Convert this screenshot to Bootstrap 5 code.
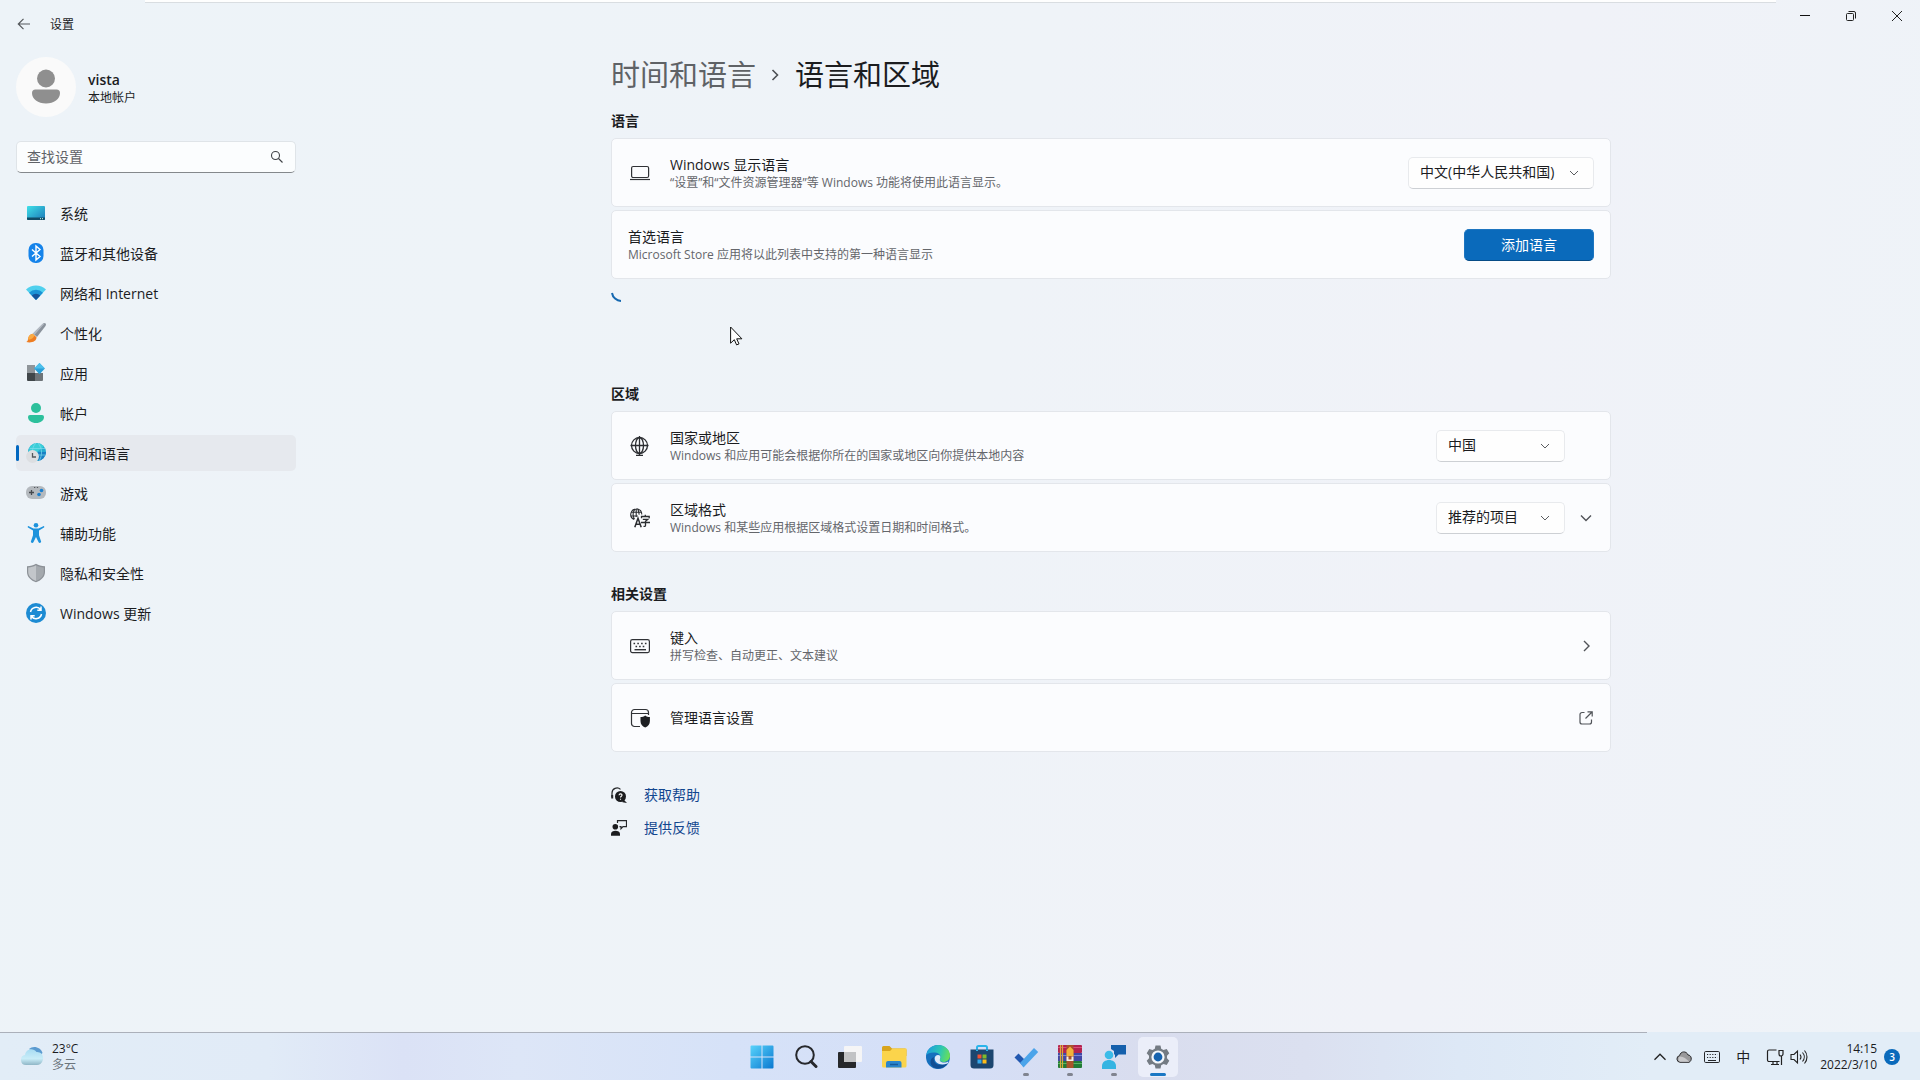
<!DOCTYPE html>
<html lang="zh-CN">
<head>
<meta charset="utf-8">
<meta name="viewport" content="width=device-width, initial-scale=1">
<title>设置</title>
<link href="https://cdn.jsdelivr.net/npm/bootstrap@5.3.0/dist/css/bootstrap.min.css" rel="stylesheet">
<style>
  :root { --ink: #1b1c1f; --dim: #64666b; --accent: #0a6abb; }
  body {
    font-family: "Open Sans", "Noto Sans CJK SC", sans-serif;
    font-size: 14px; line-height: 20px; color: var(--ink);
    background: linear-gradient(100deg, #edf3f8 0%, #eff3f8 50%, #f0f2f8 75%, #eef3f8 100%);
  }
  svg { display: block; flex: none; }
  .plain-btn { background: none; border: 0; padding: 0; color: inherit; }
  .small-text { font-size: 12px; line-height: 16px; }
  .text-drop { padding-top: 2px; }

  .title-bar {
    height: 48px; gap: 18px; padding-left: 16px;
    background:
      linear-gradient(#fefefe 2px, #d9dde1 2px) 145px 0 / calc(100% - 289px) 3px no-repeat;
  }
  .win-btn { width: 46px; height: 32px; }

  .side { width: 302px; padding: 9px 6px 0 16px; flex: none; }
  .avatar { width: 60px; height: 60px; background: #fafafa; }
  .search-box { margin-top: 24px; width: 280px; }
  .search-box input {
    height: 32px; font-size: 14px; padding: 3px 36px 5px 10px; color: var(--ink);
    background: #fbfdfe; border: 1px solid #dfe4e8; border-bottom-color: #84888c; border-radius: 5px;
  }
  .search-box input::placeholder { color: #5f6267; }
  .search-box button { top: 8px; right: 11px; }
  .side-nav { margin-top: 22px; gap: 4px; width: 280px; }
  .side-nav .nav-link {
    display: flex; align-items: center; gap: 14px; height: 36px; padding: 0 10px;
    color: var(--ink); border-radius: 5px; position: relative;
  }
  .side-nav .nav-link.active { background: #e6e9ee; color: var(--ink); }
  .side-nav .nav-link.active::before {
    content: ""; position: absolute; left: 0; top: 10px; width: 3px; height: 16px;
    border-radius: 2px; background: #0067c0;
  }

  .page { max-width: 1000px; padding-top: 7px; }
  .crumbs { font-size: 29px; line-height: 40px; gap: 15px; margin-bottom: 16px; }
  .crumbs a { color: #5f6266; text-decoration: none; }
  .crumbs h1 { font-size: 29px; line-height: 40px; font-weight: 400; margin: 0; }
  .group-title { font-size: 14px; line-height: 20px; font-weight: 600; margin: 0 0 7px; }
  .group { display: flex; flex-direction: column; gap: 3px; margin-bottom: 32px; }
  .setting {
    display: flex; align-items: center; min-height: 69px; padding: 1px 16px 0;
    background: #fbfcfe; border: 1px solid #e3e6eb; border-radius: 5px; color: var(--ink);
    text-decoration: none;
  }
  .setting .lead-icon { width: 24px; margin-right: 18px; display: flex; justify-content: center; flex: none; }
  .setting .hint { font-size: 12px; line-height: 16px; color: var(--dim); }
  .pick {
    width: 129px; height: 32px; font-size: 14px; line-height: 20px; padding: 4px 30px 6px 11px;
    color: var(--ink); border: 1px solid #e8eaed; border-bottom-color: #cdd0d4; border-radius: 5px;
    background: #fefefe url("data:image/svg+xml,%3Csvg xmlns='http://www.w3.org/2000/svg' viewBox='0 0 10 10'%3E%3Cpath d='M1 3l4 4 4-4' fill='none' stroke='%235a5c60'/%3E%3C/svg%3E") no-repeat right 14px center / 10px 10px;
  }
  .pick-wide { width: 186px; }
  .pick-indent { margin-right: 29px; }
  .add-btn {
    width: 130px; height: 32px; padding: 0; font-size: 14px; line-height: 20px; color: #fff;
    background: var(--accent); border: 1px solid #1d75c0; border-bottom-color: #064b86; border-radius: 5px;
  }
  .loading { height: 70px; }
  .pointer { position: absolute; left: 119px; top: 278px; }
  .help-list { display: flex; flex-direction: column; gap: 13px; padding-top: 1px; }
  .help-list a { display: flex; align-items: center; gap: 17px; color: #12468f; text-decoration: none; }

  .task-bar {
    height: 48px; padding-top: 2px;
    background:
      linear-gradient(#abb0ba, #abb0ba) 0 0 / calc(100% - 273px) 1px no-repeat,
      linear-gradient(90deg, #e2edf7 0%, #e1ebf7 14%, #dbe2f6 21%, #dde6f7 27%, #d6e2f8 38%, #d5dff7 50%, #d9ddee 60%, #dbe0f0 68%, #dde8f6 76%, #e2edf7 86%, #e2edf7 100%);
  }
  .side-slot { flex: 1 1 0; }
  .weather { gap: 8px; padding-left: 20px; }
  .apps { gap: 4px; }
  .app-btn {
    width: 40px; height: 40px; border-radius: 5px; position: relative;
    display: flex; align-items: center; justify-content: center;
  }
  .app-btn.current { background: #ebeef9; }
  .app-btn.running::after, .app-btn.current::after {
    content: ""; position: absolute; bottom: 1px; left: 17px; width: 6px; height: 3px;
    border-radius: 2px; background: #80848f;
  }
  .app-btn.current::after { left: 12px; width: 16px; background: #1a77c4; }
  .tray { padding-right: 20px; }
  .tray-more { margin-right: 9px; }
  .tray-set { gap: 12px; margin-right: 12px; }
  .tray-net { gap: 6px; }
  .count { width: 16px; height: 16px; font-size: 10px; line-height: 16px; background: var(--accent); color: #fff; margin-left: 7px; }
</style>
</head>
<body class="d-flex flex-column min-vh-100">

<header class="title-bar d-flex align-items-center">
  <button class="plain-btn" aria-label="返回">
    <svg width="16" height="16" viewBox="0 0 16 16" fill="none" stroke="#55585c" stroke-width="1.2"><path d="M14 8H2.5M7.500 2.800L2.300 8l5.200 5.200"/></svg>
  </button>
  <span class="small-text text-drop">设置</span>
  <div class="d-flex ms-auto align-self-start">
    <button class="plain-btn win-btn d-flex align-items-center justify-content-center" aria-label="最小化">
      <svg width="12" height="12" viewBox="0 0 12 12" stroke="#111"><path d="M1 5.500h10"/></svg>
    </button>
    <button class="plain-btn win-btn d-flex align-items-center justify-content-center" aria-label="还原">
      <svg width="12" height="12" viewBox="0 0 12 12" fill="none" stroke="#222"><rect x="1.500" y="3.500" width="7" height="7" rx="1"/><path d="M3.500 1.500H9a1.500 1.500 0 0 1 1.500 1.500v5.500"/></svg>
    </button>
    <button class="plain-btn win-btn d-flex align-items-center justify-content-center" aria-label="关闭">
      <svg width="12" height="12" viewBox="0 0 12 12" stroke="#222"><path d="M1 1l10 10M11 1L1 11"/></svg>
    </button>
  </div>
</header>

<div class="d-flex flex-grow-1">
  <aside class="side">
    <div class="d-flex align-items-center gap-2">
      <div class="avatar rounded-circle d-flex align-items-center justify-content-center me-1">
        <svg width="30" height="36" viewBox="0 0 30 36" fill="#8f8f8f"><circle cx="15" cy="9.500" r="9"/><path d="M4.500 20.500h21a3.500 3.500 0 0 1 3.500 3.500c0 6-6 10.500-14 10.500S1 30 1 24a3.500 3.500 0 0 1 3.500-3.500z"/></svg>
      </div>
      <div class="text-drop">
        <div class="fw-semibold">vista</div>
        <div class="small-text">本地帐户</div>
      </div>
    </div>

    <form class="search-box position-relative">
      <input class="form-control" type="text" aria-label="查找设置" placeholder="查找设置">
      <button type="button" class="plain-btn position-absolute" aria-label="搜索">
        <svg width="16" height="16" viewBox="0 0 16 16" fill="none" stroke="#3f4246" stroke-width="1.100"><circle cx="6.500" cy="6.500" r="4"/><path d="M9.500 9.500l4 4"/></svg>
      </button>
    </form>

    <nav class="side-nav nav nav-pills flex-column">
      <a class="nav-link" href="#">
        <svg width="20" height="20" viewBox="0 0 20 20"><defs><linearGradient id="gs" x1="0" y1="0" x2="1" y2="1"><stop stop-color="#3fe0e8"/><stop offset="1" stop-color="#1b78b8"/></linearGradient></defs><rect x="1" y="3" width="18" height="14" rx="1" fill="url(#gs)"/><path d="M1 14.500h18V16a1 1 0 0 1-1 1H2a1 1 0 0 1-1-1z" fill="#114c66"/><path d="M14 15.700h1M16 15.700h1" stroke="#cfe"/></svg>
        <span class="text-drop">系统</span></a>
      <a class="nav-link" href="#">
        <svg width="20" height="20" viewBox="0 0 20 20"><rect x="2.500" y="0" width="15" height="20" rx="7" fill="#1583ea"/><path d="M6 6.500l8 7-4 3.500V3l4 3.500-8 7" fill="none" stroke="#fff" stroke-width="1.400"/></svg>
        <span class="text-drop">蓝牙和其他设备</span></a>
      <a class="nav-link" href="#">
        <svg width="20" height="20" viewBox="0 0 20 20"><path d="M10 17L0 6.600a14.300 14.300 0 0 1 20 0z" fill="#4fd0ee"/><path d="M10 17L3 9.700a10 10 0 0 1 14 0z" fill="#1b93d6"/><path d="M10 17l-4.300-4.500a6.200 6.200 0 0 1 8.600 0z" fill="#15549b"/></svg>
        <span class="text-drop">网络和 Internet</span></a>
      <a class="nav-link" href="#">
        <svg width="20" height="20" viewBox="0 0 20 20"><path d="M19.500.500c.7.700.5 1.700 0 2.500l-8.500 11-4-3.500L16.500 1c1-1 2.300-1.200 3-.5z" fill="#8a929c"/><path d="M18.800.3L8.500 11.800 7 10.500 16.500 1c.8-.7 1.700-1 2.300-.7z" fill="#b5bbc4"/><path d="M6.700 10.700l3.800 3.600c.2 4-5 6-10.200 4.700 1.800-.8 1.400-2 2-4.200.6-2.400 2.400-3.900 4.400-4.100z" fill="#ee7d22"/><path d="M6.700 10.700l1.900 1.800c-1.500 2.500-3.200 4-5.900 4.300-.4 0-.5-.8-.4-1.900.4-2.500 2.400-4 4.400-4.200z" fill="#f9ab45"/></svg>
        <span class="text-drop">个性化</span></a>
      <a class="nav-link" href="#">
        <svg width="20" height="20" viewBox="0 0 20 20"><path d="M1 2h8v8.500H1z" fill="#8f959a"/><path d="M1 10h8v8H2a1 1 0 0 1-1-1z" fill="#40464a"/><path d="M9 10h8v7a1 1 0 0 1-1 1H9z" fill="#6e7479"/><path d="M13.500 0l5.400 5.600-5.400 5.600-5.400-5.600z" fill="#2a9fd8"/><path d="M13.500 0l5.400 5.600H8.100z" fill="#4cc0ec"/></svg>
        <span class="text-drop">应用</span></a>
      <a class="nav-link" href="#">
        <svg width="20" height="20" viewBox="0 0 20 20" fill="#2cc09c"><circle cx="10" cy="5" r="5"/><path d="M4 12h12a2 2 0 0 1 2 2c0 3.500-3.500 6-8 6s-8-2.500-8-6a2 2 0 0 1 2-2z"/></svg>
        <span class="text-drop">帐户</span></a>
      <a class="nav-link active" aria-current="page" href="#">
        <svg width="20" height="20" viewBox="0 0 20 20"><circle cx="11" cy="9" r="9" fill="#25abd0"/><path d="M4 3.500a9 9 0 0 1 14 0L11 9H2.500z" fill="#3ccfd8"/><path d="M20 9a9 9 0 0 1-8 9V9z" fill="#1b80c4"/><path d="M3.500 5.500h15.500M8 12h11.500M12 0c4.500 5 4.500 13 1 18M10 0C7 3 6.500 6 6.500 9" fill="none" stroke="#7fdcec" stroke-width=".7"/><circle cx="6.500" cy="13.500" r="6.400" fill="#dcdee1"/><path d="M6.500 10v4h3.500" fill="none" stroke="#54575b" stroke-width="1.300"/></svg>
        <span class="text-drop">时间和语言</span></a>
      <a class="nav-link" href="#">
        <svg width="20" height="20" viewBox="0 0 20 20"><rect y="3" width="20" height="13" rx="6" fill="#b4b9be"/><path d="M3 9.500h5M5.500 7v5" stroke="#45494e" stroke-width="1.300"/><circle cx="15.500" cy="7.500" r="1.800" fill="#1c80cf"/><circle cx="13" cy="11.500" r="1.800" fill="#1c80cf"/><path d="M8 4.500h1.300M10.800 4.500h1.300" stroke="#55595e"/></svg>
        <span class="text-drop">游戏</span></a>
      <a class="nav-link" href="#">
        <svg width="20" height="20" viewBox="0 0 20 20" fill="#1c92dc"><circle cx="10" cy="2.300" r="2.300"/><path d="M2.700 3.200c-.8-.4-1.400.9-.7 1.400L7 7.500v4.700L4.900 18.500c-.3 1.400 1.900 2 2.500.8L10 14l2.600 5.300c.6 1.200 2.800.6 2.500-.8L13 12.200V7.500l5-2.900c.7-.5.100-1.800-.7-1.400L12.500 5.500h-5z"/></svg>
        <span class="text-drop">辅助功能</span></a>
      <a class="nav-link" href="#">
        <svg width="20" height="20" viewBox="0 0 20 20"><path d="M10 .8C7.500 2.500 4.500 3.200 1 3.300V9c0 5 4 8.500 9 10.300 5-1.800 9-5.300 9-10.300V3.300C15.500 3.200 12.500 2.500 10 .8z" fill="#8c9197"/><path d="M10 2.200C7.700 3.600 5 4.300 2.200 4.500V9c0 4.300 3.500 7.300 7.800 9z" fill="#c2c6ca"/><path d="M10 2.200c2.300 1.400 5 2.100 7.800 2.300V9c0 4.300-3.500 7.300-7.800 9z" fill="#a4a9ae"/></svg>
        <span class="text-drop">隐私和安全性</span></a>
      <a class="nav-link" href="#">
        <svg width="20" height="20" viewBox="0 0 20 20"><circle cx="10" cy="10" r="10" fill="#1d8bd3"/><path d="M4.500 9a5.700 5.700 0 0 1 10.200-2.300M15.500 11a5.700 5.700 0 0 1-10.200 2.300M15 3.500v3.700h-3.700M5 16.500v-3.700h3.700" fill="none" stroke="#fff" stroke-width="1.500"/></svg>
        <span class="text-drop">Windows 更新</span></a>
    </nav>
  </aside>

  <main class="flex-grow-1 px-3">
    <div class="page mx-auto position-relative">
      <div class="crumbs d-flex align-items-center">
        <a href="#">时间和语言</a>
        <svg width="9" height="12" viewBox="0 0 9 12" fill="none" stroke="#4d5054" stroke-width="1.600"><path d="M1.500 1l5 5-5 5"/></svg>
        <h1>语言和区域</h1>
      </div>

      <h2 class="group-title">语言</h2>
      <section class="group">
        <div class="setting">
          <span class="lead-icon"><svg width="20" height="20" viewBox="0 0 20 20" fill="none" stroke="#303236" stroke-width="1.200"><rect x="1.600" y="3.500" width="17" height="11" rx="1.500"/><path d="M0 16.500h20"/></svg></span>
          <div class="flex-grow-1">
            <label class="d-block" for="display-lang">Windows 显示语言</label>
            <div class="hint">“设置”和“文件资源管理器”等 Windows 功能将使用此语言显示。</div>
          </div>
          <select id="display-lang" class="form-select pick pick-wide"><option>中文(中华人民共和国)</option></select>
        </div>
        <div class="setting">
          <div class="flex-grow-1">
            <div>首选语言</div>
            <div class="hint">Microsoft Store 应用将以此列表中支持的第一种语言显示</div>
          </div>
          <button class="btn add-btn">添加语言</button>
        </div>
        <div class="loading" role="status" aria-label="正在加载">
          <svg width="20" height="20" viewBox="0 0 20 20" fill="none" stroke="#1668b0" stroke-width="2"><path d="M1 11a9.500 9.500 0 0 0 9 8"/></svg>
        </div>
      </section>

      <h2 class="group-title">区域</h2>
      <section class="group">
        <div class="setting">
          <span class="lead-icon"><svg width="20" height="20" viewBox="0 0 20 20" fill="none" stroke="#2b2d31" stroke-width="1.300"><circle cx="9.500" cy="9.500" r="8"/><ellipse cx="9.500" cy="9.500" rx="4" ry="8"/><path d="M.5 9.500h18M9.500 0v19M6 19.300h7"/></svg></span>
          <div class="flex-grow-1">
            <label class="d-block" for="country">国家或地区</label>
            <div class="hint">Windows 和应用可能会根据你所在的国家或地区向你提供本地内容</div>
          </div>
          <select id="country" class="form-select pick pick-indent"><option>中国</option></select>
        </div>
        <div class="setting">
          <span class="lead-icon"><svg width="20" height="20" viewBox="0 0 20 20" fill="none" stroke="#2b2d31" stroke-width="1.100"><path d="M4 11.500A5.500 5.500 0 1 1 11.800 6.500M1 4.300h10.500M.8 8h7M5 .9c-2.200 3-2.200 7.300-.5 10.300M7.500.9c1.200 1.700 1.700 3.700 1.500 5.700M6.200.6v8.500"/><path d="M4.800 19.300l3.200-9 3.200 9M6 16.300h4" stroke-width="1.500"/><path d="M11.500 10.300V8.500h7.700v1.800M15.300 6.800v1.700M12.800 11.300h5l-2.300 2v4.200c0 .8-.7 1-2 .8M11 14.500h9" stroke-width="1.300"/></svg></span>
          <div class="flex-grow-1">
            <label class="d-block" for="format">区域格式</label>
            <div class="hint">Windows 和某些应用根据区域格式设置日期和时间格式。</div>
          </div>
          <select id="format" class="form-select pick"><option>推荐的项目</option></select>
          <button class="plain-btn ps-1 ms-2" aria-label="展开"><svg width="17" height="16" viewBox="0 0 17 16" fill="none" stroke="#505358" stroke-width="1.400"><path d="M4 5.500l5 5 5-5"/></svg></button>
        </div>
      </section>

      <h2 class="group-title">相关设置</h2>
      <section class="group">
        <a class="setting" href="#">
          <span class="lead-icon"><svg width="20" height="20" viewBox="0 0 20 20" fill="none" stroke="#303236" stroke-width="1.200"><rect x=".600" y="3.600" width="18.800" height="13" rx="1.800"/><path d="M3.500 7.500h13" stroke-width="1.600" stroke-dasharray="1.600 2.200"/><path d="M5.500 10.500h10" stroke-width="1.600" stroke-dasharray="1.600 2"/><path d="M4.500 13.700h11.500" stroke-width="1.400"/></svg></span>
          <div class="flex-grow-1">
            <div>键入</div>
            <div class="hint">拼写检查、自动更正、文本建议</div>
          </div>
          <svg width="16" height="16" viewBox="0 0 16 16" fill="none" stroke="#505358" stroke-width="1.400"><path d="M6 3l5 5-5 5"/></svg>
        </a>
        <a class="setting" href="#">
          <span class="lead-icon"><svg width="20" height="20" viewBox="0 0 20 20" fill="none" stroke="#303236" stroke-width="1.200"><path d="M10 18.500H4.500a3 3 0 0 1-3-3v-11a3 3 0 0 1 3-3h11a3 3 0 0 1 3 3V7M1.500 5.500h17"/><path d="M15.200 7.500c-1.300 1-2.800 1.500-4.700 1.600V13c0 3.300 1.800 5.300 4.700 6.500 2.900-1.200 4.700-3.200 4.700-6.500V9.100c-1.900-.1-3.400-.6-4.700-1.600z" fill="#1d1f22" stroke="none"/></svg></span>
          <div class="flex-grow-1">管理语言设置</div>
          <svg width="16" height="16" viewBox="0 0 16 16" fill="none" stroke="#505358" stroke-width="1.200"><path d="M6.500 2.500H4A2 2 0 0 0 2 4.500V12a2 2 0 0 0 2 2h7.500a2 2 0 0 0 2-2V9.500M9.500 1.800h4.700v4.700M14 2L7.500 8.500"/></svg>
        </a>
      </section>

      <div class="help-list">
        <a href="#"><svg width="16" height="16" viewBox="0 0 16 16"><path d="M1 10V6a5 5 0 0 1 8.500-3.600" fill="none" stroke="#26282b" stroke-width="1.200"/><path d="M.2 8h2v3.500h-2z" fill="#26282b"/><circle cx="9.500" cy="9.500" r="5.500" fill="#1b1c1f"/><path d="M12 12l4 4-4.500-.8z" fill="#1b1c1f"/><path d="M8 8.300c.2-2 3.200-1.800 3 0-.1 1-1.500 1-1.500 2.300M9.500 11.800v1" fill="none" stroke="#fff" stroke-width="1.100"/></svg>获取帮助</a>
        <a href="#"><svg width="16" height="16" viewBox="0 0 16 16"><circle cx="4.300" cy="6.800" r="2.800" fill="#1b1c1f"/><path d="M0 15.800V14c0-4.400 9-4.400 9 0v1.800z" fill="#1b1c1f"/><path d="M6.500 3V.7h9v6H12l-2 2v-2H8.500" fill="none" stroke="#26282b" stroke-width="1.200"/></svg>提供反馈</a>
      </div>

      <svg class="pointer" width="13" height="20" viewBox="0 0 13 20"><path d="M.6 1v16.200l3.700-3.500 2.300 5.200 2.400-1-2.300-5.100h5.200z" fill="#fff" stroke="#111"/></svg>
    </div>
  </main>
</div>

<footer class="task-bar d-flex align-items-center">
  <div class="side-slot weather d-flex align-items-center">
    <svg width="24" height="24" viewBox="0 0 24 24"><defs><linearGradient id="gw" x1="0" y1="0" x2="0" y2="1"><stop stop-color="#a8dcf2"/><stop offset=".6" stop-color="#c9edf8"/><stop offset="1" stop-color="#8fb6c6"/></linearGradient></defs><path d="M9 4c4-4 12-2 13.500 4l-3 3z" fill="#5b9bd0"/><path d="M6 20a5 5 0 0 1-1-9.900C5.500 4 13 2 16.500 7c5-.5 8 4.500 6 9-1 2.600-3 4-5.500 4z" fill="url(#gw)"/></svg>
    <div class="small-text"><div>23°C</div><div class="text-secondary">多云</div></div>
  </div>

  <nav class="apps d-flex">
    <button class="plain-btn app-btn" aria-label="开始"><svg width="24" height="24" viewBox="0 0 24 24"><defs><linearGradient id="g0" x1="0" y1="0" x2="1" y2="1"><stop stop-color="#58d3fb"/><stop offset="1" stop-color="#0a78d0"/></linearGradient></defs><path d="M.5 1.500a1 1 0 0 1 1-1h10v11H.5zM12.500.500h10a1 1 0 0 1 1 1v10h-11zM.5 12.500h11v11h-10a1 1 0 0 1-1-1zM12.500 12.500h11v10a1 1 0 0 1-1 1h-10z" fill="url(#g0)"/></svg></button>
    <button class="plain-btn app-btn" aria-label="搜索"><svg width="24" height="24" viewBox="0 0 24 24" fill="none" stroke="#26282c"><circle cx="11" cy="10" r="8.800" stroke-width="2"/><path d="M17 16.500l5 5" stroke-width="3" stroke-linecap="round"/></svg></button>
    <button class="plain-btn app-btn" aria-label="任务视图"><svg width="26" height="24" viewBox="0 0 26 24"><rect x="1" y="7" width="18" height="16" rx="1" fill="#26282b"/><rect x="7" y="1" width="18" height="16" rx="1" fill="#f5f5f6"/><path d="M7 7h12v10H7z" fill="#c2c3c5"/></svg></button>
    <button class="plain-btn app-btn" aria-label="文件资源管理器"><svg width="26" height="24" viewBox="0 0 26 24"><path d="M1 2.500A1.500 1.500 0 0 1 2.500 1h6l2.500 2.500H24A1.500 1.500 0 0 1 25.500 5v6H1z" fill="#d9a51d"/><path d="M1 6h8l2.500-2.500h14V21a1.500 1.500 0 0 1-1.500 1.500H2.500A1.500 1.500 0 0 1 1 21z" fill="#fbd44b"/><path d="M5 22.500V18a2 2 0 0 1 2-2h11.500a2 2 0 0 1 2 2v4.500z" fill="#2a86cc"/><path d="M9 19.500h8" stroke="#155a9a" stroke-width="1.500"/></svg></button>
    <button class="plain-btn app-btn" aria-label="Edge"><svg width="24" height="24" viewBox="0 0 24 24"><defs><linearGradient id="g1" x1="0" y1=".3" x2="1" y2=".5"><stop stop-color="#1b9de0"/><stop offset=".6" stop-color="#2fc8b0"/><stop offset="1" stop-color="#6adf56"/></linearGradient></defs><circle cx="12" cy="12" r="12" fill="#1670bd"/><path d="M.2 10C1.500 3.500 6.500 0 12 0c7 0 12 5 12 10.500 0 4-3 6.500-6.500 6.500-3 0-4.300-1.200-3.500-2.700C15.500 11 13.500 8 9 7.500 5 7 1.500 8.500.2 10z" fill="url(#g1)"/><path d="M8 12c-1.500 6 4 10.500 14 6-4 6-11.500 7-15.500 3.500C3 18 4.500 13 8 12z" fill="#124e93"/><path d="M8.700 13.500c0-2.300 1.500-3.500 3.300-3.500 2 0 3 1.500 2 4-.8 2 1 3.500 4 3.500 2 0 3.500-.5 4.300-1 .3.500-.3 1.500-.8 2-7 2.500-12.500 0-12.800-5z" fill="#dfe9f8"/></svg></button>
    <button class="plain-btn app-btn" aria-label="Microsoft Store"><svg width="24" height="24" viewBox="0 0 24 24"><path d="M7 6V2.500A1.500 1.500 0 0 1 8.500 1h7A1.500 1.500 0 0 1 17 2.500V6" fill="none" stroke="#2bb4ea" stroke-width="2"/><path d="M.5 4.500h23V20a3.500 3.500 0 0 1-3.500 3.500H4A3.500 3.500 0 0 1 .5 20z" fill="#1c466f"/><path d="M7 4.500V6M17 4.500V6" stroke="#2bb4ea" stroke-width="2"/><path d="M7.500 9.500h4v4h-4z" fill="#f05133"/><path d="M12.500 9.500h4v4h-4z" fill="#7fba2c"/><path d="M7.500 14.500h4v4h-4z" fill="#34a8ea"/><path d="M12.500 14.500h4v4h-4z" fill="#fdbc1a"/></svg></button>
    <button class="plain-btn app-btn running" aria-label="To Do"><svg width="26" height="24" viewBox="0 0 26 24"><path d="M1.500 12.500l4-4 8.500 8.500-4 4z" fill="#2258b0"/><path d="M7 18L21 3l4.200 4L10.500 22.500z" fill="#4ba4ea"/></svg></button>
    <button class="plain-btn app-btn running" aria-label="WinRAR"><svg width="26" height="24" viewBox="0 0 26 24"><rect x="1" width="24" height="8" rx="1" fill="#b3234f"/><rect x="1" y="8" width="24" height="8" fill="#4147a5"/><rect x="1" y="16" width="24" height="7" rx="1" fill="#217b35"/><path d="M1 2.500h24" stroke="#db4f7a"/><path d="M1 10.500h24" stroke="#7d82d6"/><path d="M1 18.500h24" stroke="#57b565"/><path d="M3.500 0v23M5.500 0v23" stroke="#d8a93a" stroke-width="1.200"/><path d="M9.500 0h7v23h-7z" fill="#a9532a"/><path d="M9.500 5L13 1.500 16.500 5v6h-7z" fill="#f2b33a"/><path d="M9.500 16v-4.500h2v3h3v-3h2V16z" fill="#f4eee4"/></svg></button>
    <button class="plain-btn app-btn running" aria-label="反馈中心"><svg width="26" height="26" viewBox="0 0 26 26"><circle cx="8" cy="11" r="4.300" fill="#3bbbe8"/><path d="M1 25v-3c0-8 14-8 14 0v3z" fill="#35b4e2"/><path d="M10 1h15v9.500h-7.500L14 14v-3.500h-1V7l-3-2z" fill="#1560ac"/></svg></button>
    <button class="plain-btn app-btn current" aria-label="设置"><svg width="24" height="24" viewBox="0 0 24 24"><path d="M9.500.500h5l.7 3.200 2.300 1.300 3.200-1 2.600 4.300L21 10.700v2.600l2.300 2.400-2.600 4.300-3.200-1-2.300 1.300-.7 3.200h-5l-.7-3.200L6.500 19l-3.200 1L.7 15.700 3 13.300v-2.600L.7 8.300 3.300 4l3.200 1 2.300-1.300z" fill="#747b83"/><circle cx="12" cy="12" r="6.600" fill="#f4f7fb"/><circle cx="12" cy="12" r="4.400" fill="#1763ae"/></svg></button>
  </nav>

  <div class="side-slot tray d-flex align-items-center justify-content-end">
    <button class="plain-btn tray-more" aria-label="显示隐藏的图标"><svg width="14" height="14" viewBox="0 0 14 14" fill="none" stroke="#222" stroke-width="1.300"><path d="M1.500 9.800L7 4.200l5.500 5.600"/></svg></button>
    <div class="tray-set d-flex align-items-center">
      <svg width="16" height="14" viewBox="0 0 16 14"><path d="M4 12.300a3.400 3.400 0 0 1-.4-6.700C4.500 1 10.500.6 12 5c3.500 0 4.700 5.500 1 7.300z" fill="#99999b" stroke="#2b2b2d"/><path d="M4 11.800a3 3 0 0 1 0-5.300c4 .2 6 2.200 9.500 5.300z" fill="#c9c9cb"/></svg>
      <svg width="16" height="14" viewBox="0 0 16 14" fill="none" stroke="#25272a"><rect x=".5" y="1.500" width="15" height="11" rx="1.200"/><path d="M3 4.500h10.500M3 7.500h10.500" stroke-dasharray="1.200 1.400"/><path d="M4 10.500h8"/></svg>
      <span class="px-1">中</span>
      <div class="tray-net d-flex align-items-center">
        <svg width="18" height="16" viewBox="0 0 18 16" fill="none" stroke="#222" stroke-width="1.200"><path d="M10.500 1H3a1.500 1.500 0 0 0-1.500 1.500V11A1.500 1.500 0 0 0 3 12.500h10.500M5 15.500h8M7 12.500v3M11 12.500v3M15.500 7v9M13 1.500h4V5a2 2 0 0 1-4 0z"/></svg>
        <svg width="18" height="16" viewBox="0 0 18 16" fill="none" stroke="#222" stroke-width="1.100"><path d="M1 5.500h3L7.500 2v12L4 10.500H1zM10 5.500c1.200 1.500 1.200 3.500 0 5M12.500 3.500c2.300 2.600 2.300 6.400 0 9M14.500 1.500c3.300 3.600 3.300 9.400 0 13"/></svg>
      </div>
    </div>
    <div class="small-text text-end"><div>14:15</div><div>2022/3/10</div></div>
    <span class="count rounded-circle text-center fw-semibold">3</span>
  </div>
</footer>

<script src="https://cdn.jsdelivr.net/npm/bootstrap@5.3.0/dist/js/bootstrap.bundle.min.js"></script>
</body>
</html>
